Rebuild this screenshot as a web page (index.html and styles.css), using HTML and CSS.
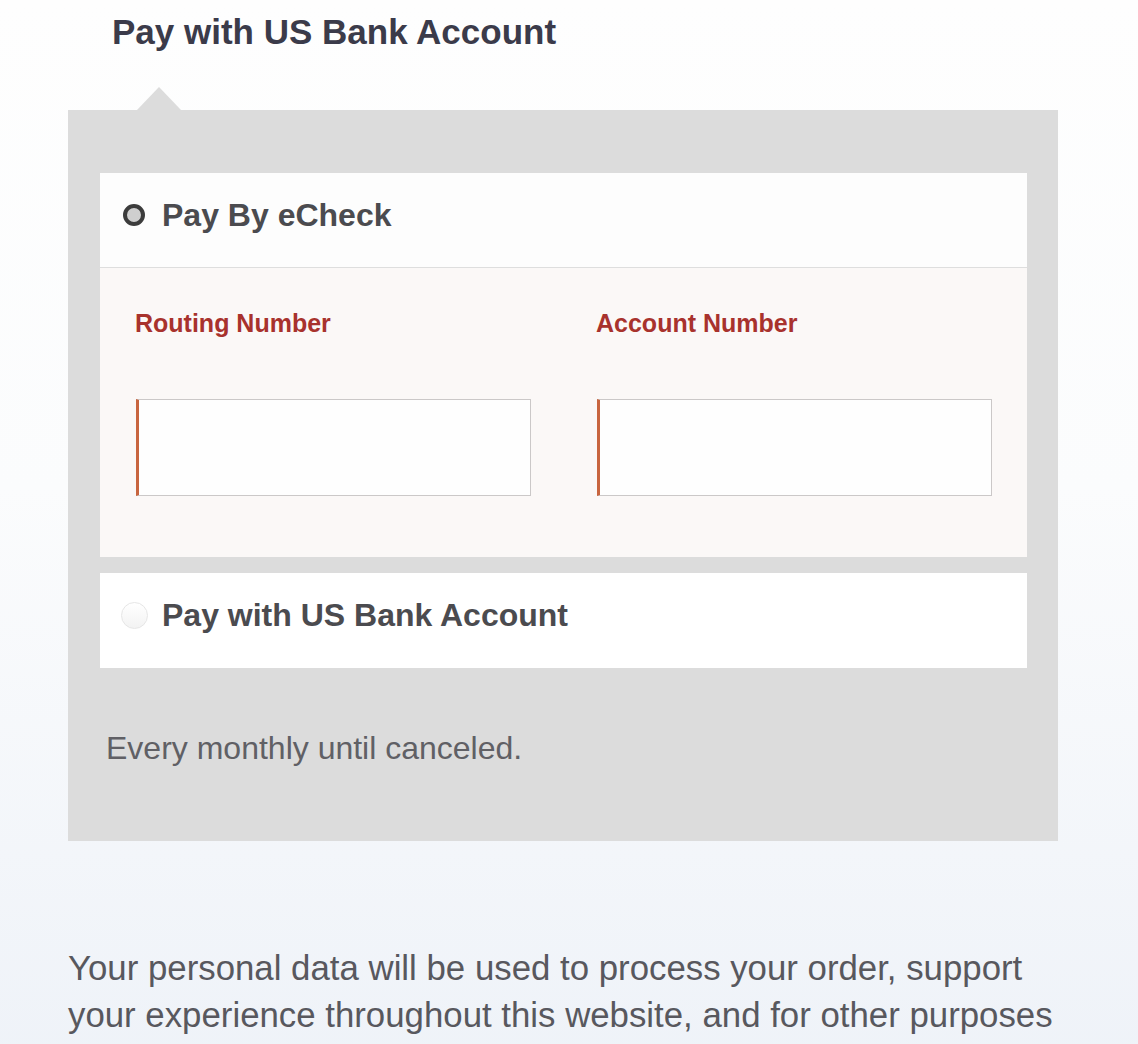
FILE: index.html
```html
<!DOCTYPE html>
<html lang="en">
<head>
  <meta charset="UTF-8" />
  <meta name="viewport" content="width=device-width, initial-scale=1.0" />
  <title>Checkout – Payment</title>
  <link rel="stylesheet" href="styles.css">
</head>
<body>
  <div class="checkout">
    <h3 class="pay-title">Pay with US Bank Account</h3>

    <div class="payment-box">
      <div class="method">
        <div class="method-head method-head--open">
          <span class="radio-slot"><span class="radio radio--on"></span></span>
          <span class="method-name">Pay By eCheck</span>
        </div>
        <div class="method-fields">
          <div class="field">
            <label class="field-label" for="routing">Routing Number</label>
            <input class="field-input" type="text" id="routing" />
          </div>
          <div class="field">
            <label class="field-label" for="account">Account Number</label>
            <input class="field-input" type="text" id="account" />
          </div>
        </div>
      </div>

      <div class="method">
        <div class="method-head">
          <span class="radio-slot"><span class="radio radio--off"></span></span>
          <span class="method-name">Pay with US Bank Account</span>
        </div>
      </div>

      <p class="recurring">Every monthly until canceled.</p>
    </div>

    <p class="privacy">Your personal data will be used to process your order, support your experience throughout this website, and for other purposes described in our privacy policy.</p>
  </div>
</body>
</html>
```

FILE: styles.css
```css
html {
  background: #fefefe;
}
body {
  margin: 0;
  min-height: 100vh;
  background: linear-gradient(to bottom, #fefefe 0%, #fbfcfd 45%, #eef2f8 100%);
  font-family: "Liberation Sans", Arial, sans-serif;
  overflow: hidden;
}
.checkout {
  width: 990px;
  margin-left: 68px;
}
.pay-title {
  margin: 12px 0 0;
  padding-left: 44px;
  font-size: 35px;
  line-height: 40px;
  font-weight: bold;
  color: #3b3b4a;
}
.payment-box {
  position: relative;
  margin-top: 58px;
  padding: 63px 31px 73px 32px;
  background: #dcdcdc;
}
.payment-box::before {
  content: "";
  position: absolute;
  left: 69px;
  top: -23px;
  border-left: 22px solid transparent;
  border-right: 22px solid transparent;
  border-bottom: 23px solid #dcdcdc;
}
.method {
  background: #fdfdfd;
}
.method + .method {
  margin-top: 16px;
  background: #fff;
}
.method-head {
  box-sizing: border-box;
  height: 95px;
  padding: 21px 23px 0;
  display: flex;
  align-items: flex-start;
}
.method-head--open {
  border-bottom: 1px solid #dedede;
}
.radio-slot {
  width: 22px;
  height: 42px;
  margin-right: 17px;
  display: flex;
  align-items: center;
  justify-content: center;
}
.radio {
  flex: none;
  box-sizing: border-box;
  border-radius: 50%;
}
.radio--on {
  width: 22px;
  height: 22px;
  border: 4px solid #3c3c3c;
  background: #cfcfcf;
}
.radio--off {
  width: 27px;
  height: 27px;
  border: 1px solid #e6e6e6;
  background: linear-gradient(to bottom, #fff, #f3f3f3);
}
.method-name {
  font-size: 32px;
  line-height: 42px;
  font-weight: bold;
  color: #4b4b4f;
}
.method-fields {
  display: grid;
  grid-template-columns: 1fr 1fr;
  column-gap: 65px;
  padding: 40px 35px 61px;
  background: #fbf8f7;
}
.field {
  display: flex;
  flex-direction: column;
}
.field-label {
  font-size: 25px;
  line-height: 30px;
  font-weight: bold;
  color: #a8322d;
}
.field-input {
  box-sizing: border-box;
  height: 97px;
  margin: 61px 0 0 1px;
  border: 1px solid #cbc8c8;
  border-left: 3px solid #c8653f;
  background: #fefefe;
  font-size: 28px;
  font-family: inherit;
}
.recurring {
  margin: 60px 0 0;
  padding-left: 6px;
  font-size: 32px;
  line-height: 40px;
  color: #606065;
}
.privacy {
  margin: 103px 0 0;
  font-size: 34.8px;
  line-height: 47px;
  color: #58585e;
}
```
